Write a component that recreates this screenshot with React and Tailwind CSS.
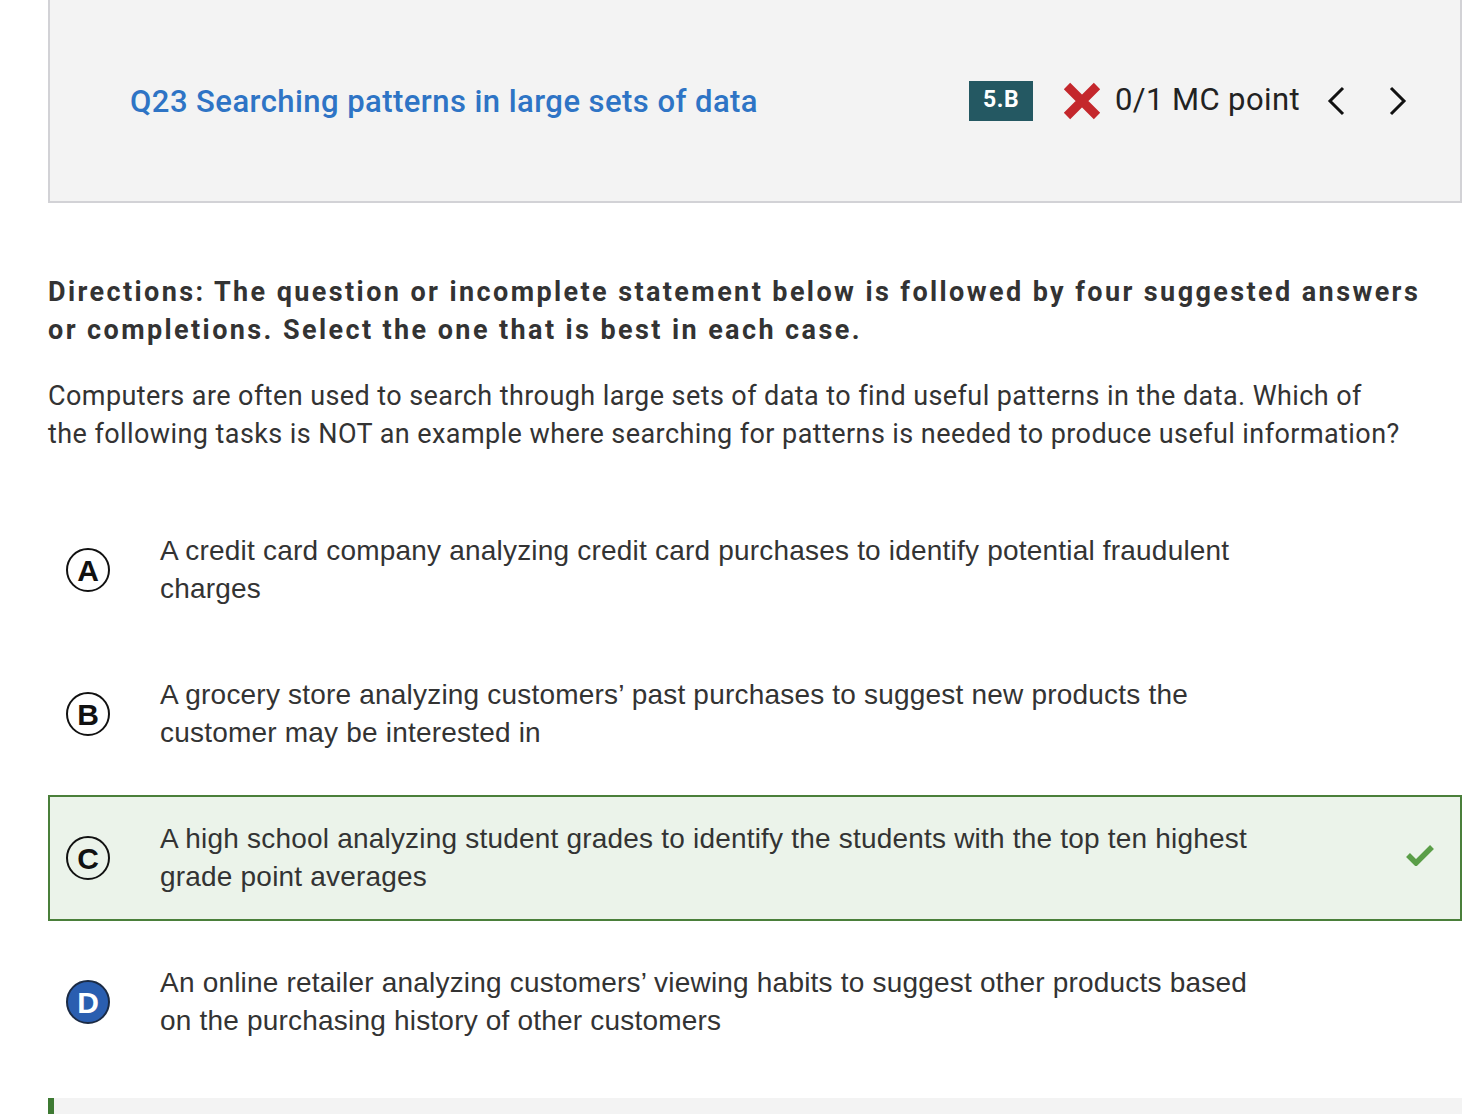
import React from "react";

// Pilihan jawaban
const OPTIONS = [
  {
    letter: "A",
    lines: [
      "A credit card company analyzing credit card purchases to identify potential fraudulent",
      "charges",
    ],
  },
  {
    letter: "B",
    lines: [
      "A grocery store analyzing customers\u2019 past purchases to suggest new products the",
      "customer may be interested in",
    ],
  },
  {
    letter: "C",
    correct: true,
    lines: [
      "A high school analyzing student grades to identify the students with the top ten highest",
      "grade point averages",
    ],
  },
  {
    letter: "D",
    selected: true,
    lines: [
      "An online retailer analyzing customers\u2019 viewing habits to suggest other products based",
      "on the purchasing history of other customers",
    ],
  },
];

const WrongIcon = () => (
  <svg width="40" height="40" viewBox="0 0 40 40">
    <path d="M5 5 L35 35 M35 5 L5 35" stroke="#c4272c" strokeWidth="9" strokeLinecap="butt" />
  </svg>
);

const ChevronLeft = () => (
  <svg width="20" height="30" viewBox="0 0 20 30" fill="none">
    <path d="M17 2 L4 15 L17 28" stroke="#111" strokeWidth="3" />
  </svg>
);

const ChevronRight = () => (
  <svg width="20" height="30" viewBox="0 0 20 30" fill="none">
    <path d="M3 2 L16 15 L3 28" stroke="#111" strokeWidth="3" />
  </svg>
);

const CheckIcon = () => (
  <svg width="28" height="22" viewBox="0 0 28 22" fill="none">
    <path d="M2 11 L10 19 L26 3" stroke="#5a9e48" strokeWidth="5.5" />
  </svg>
);

function LetterCircle({ letter, selected }) {
  return (
    <div
      className={`w-[44px] h-[44px] rounded-full border-2 flex items-center justify-center shrink-0 ${
        selected ? "bg-[#2a5eb0] border-[#1b2b45] text-white" : "bg-transparent border-[#111] text-[#111]"
      }`}
    >
      <span className="text-[30px] leading-none font-bold [font-family:'Liberation_Sans',Arial,sans-serif] mt-[1px]">
        {letter}
      </span>
    </div>
  );
}

export default function App() {
  return (
    <div className="bg-white min-h-[1114px] [font-family:Roboto,sans-serif]">
      <div className="ml-[48px] w-[1414px]">
        {/* Header soal */}
        <div className="h-[203px] bg-[#f3f3f3] border-2 border-t-0 border-[#d2d2d6] flex items-center pl-[80px] pr-[52px]">
          <h2 className="text-[31px] font-medium text-[#2e74c5] tracking-[0.45px] mt-[3px]">
            Q23 Searching patterns in large sets of data
          </h2>
          <div className="ml-auto flex items-center">
            <span className="w-[64px] h-[40px] bg-[#245862] text-white text-[23px] font-bold flex items-center justify-center tracking-[0.5px]">
              5.B
            </span>
            <span className="ml-[29px]">
              <WrongIcon />
            </span>
            <span className="ml-[13px] text-[31px] text-[#222] tracking-[0.4px]">0/1 MC point</span>
            <span className="ml-[26px]">
              <ChevronLeft />
            </span>
            <span className="ml-[42px]">
              <ChevronRight />
            </span>
          </div>
        </div>

        {/* Petunjuk */}
        <p className="mt-[70px] text-[27px] leading-[38px] font-bold text-[#333] tracking-[2.4px] whitespace-nowrap">
          Directions: The question or incomplete statement below is followed by four suggested answers
          <br />
          or completions. Select the one that is best in each case.
        </p>

        <p className="mt-[28px] text-[27px] leading-[38px] text-[#333] tracking-[0.42px] whitespace-nowrap">
          Computers are often used to search through large sets of data to find useful patterns in the data. Which of
          <br />
          the following tasks is NOT an example where searching for patterns is needed to produce useful information?
        </p>

        {/* Daftar pilihan */}
        <div className="mt-[54px] flex flex-col gap-[18px]">
          {OPTIONS.map((opt) => (
            <div
              key={opt.letter}
              className={`h-[126px] flex items-center border-2 ${
                opt.correct ? "border-[#4a7f3a] bg-[#ebf3ea]" : "border-transparent"
              }`}
            >
              <div className="ml-[16px]">
                <LetterCircle letter={opt.letter} selected={opt.selected} />
              </div>
              <div className="ml-[50px] [font-family:'Liberation_Sans',Arial,sans-serif] text-[28px] leading-[38px] tracking-[0.2px] text-[#333] whitespace-nowrap">
                {opt.lines[0]}
                <br />
                {opt.lines[1]}
              </div>
              {opt.correct && (
                <div className="ml-auto mr-[26px] -mt-[6px]">
                  <CheckIcon />
                </div>
              )}
            </div>
          ))}
        </div>

        {/* Bagian berikutnya */}
        <div className="mt-[33px] h-[20px] bg-[#f3f3f3] border-l-[6px] border-[#3e7a33]" />
      </div>
    </div>
  );
}
